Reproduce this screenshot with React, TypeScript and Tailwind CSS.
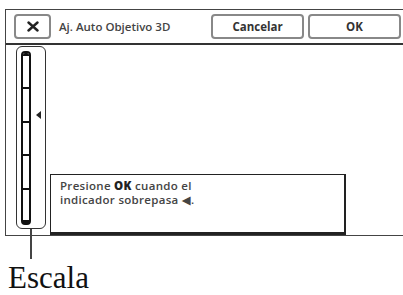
export default function App() {
  const ui = { fontFamily: '"Open Sans", "DejaVu Sans", sans-serif' };

  return (
    <div className="w-[403px] h-[295px] bg-white overflow-hidden pt-[9px]">
      {/* camera screen frame */}
      <div className="ml-[5px] w-[398px] h-[227px] border-l border-t border-b border-[#444] flex flex-col" style={ui}>
        <div className="h-[35px] border-b-2 border-[#333] flex items-center shrink-0">
          <div className="ml-[8px] w-[37px] h-[25px] rounded-[4px] border-2 border-[#888] flex items-center justify-center">
            <svg width="12" height="11" viewBox="0 0 12 11">
              <path d="M1.5 1.5 L10.5 9.5 M10.5 1.5 L1.5 9.5" stroke="#222" strokeWidth="2.4" strokeLinecap="round" />
            </svg>
          </div>
          <div className="ml-[8px] text-[11.5px] font-semibold text-[#444]">Aj. Auto Objetivo 3D</div>
          <div className="ml-auto flex gap-[4px] pr-[2px]">
            <div className="w-[93px] h-[25px] rounded-[4px] border-2 border-[#888] flex items-center justify-center text-[11.5px] font-bold text-[#333]">
              Cancelar
            </div>
            <div className="w-[93px] h-[25px] rounded-[4px] border-2 border-[#888] flex items-center justify-center text-[11.5px] font-bold text-[#333]">
              OK
            </div>
          </div>
        </div>

        <div className="flex flex-1 pt-[1px]">
          {/* scale */}
          <div className="ml-[10px] flex flex-col items-center w-[30px]">
            <div className="relative w-[30px] h-[183px] rounded-[6px] border-[1.5px] border-[#333] flex justify-start pl-[3.5px] pt-[3.5px]">
              <div className="w-[10px] h-[174px] rounded-[4px] border-2 border-[#111] flex flex-col">
                <div className="h-[34px] border-t-[3px] border-[#111] rounded-t-[2px]" />
                <div className="h-[34px] border-t-2 border-[#111]" />
                <div className="h-[33px] border-t-2 border-[#111]" />
                <div className="h-[34px] border-t-2 border-[#111]" />
                <div className="flex-1 border-t-2 border-[#111]" />
                <div className="h-[3px] bg-[#111]" />
              </div>
              <svg className="absolute left-[19px] top-[64px]" width="5" height="8" viewBox="0 0 5 8">
                <path d="M5 0 L0 4 L5 8 Z" fill="#222" />
              </svg>
            </div>
            <div className="w-[1.5px] flex-1 bg-[#444]" />
          </div>

          {/* message */}
          <div className="ml-[4px] flex flex-col justify-end">
            <div className="w-[296px] h-[61px] border-t-[1.5px] border-l-[1.5px] border-r-2 border-b-[3px] border-[#222] pl-[9px] pt-[3px] text-[11.5px] leading-[16px] tracking-[0.3px] font-semibold text-[#444]">
              <div>
                Presione <span className="font-extrabold text-[#222]">OK</span> cuando el
              </div>
              <div className="-mt-[2px]">indicador sobrepasa ◀.</div>
            </div>
          </div>
        </div>
      </div>

      {/* callout */}
      <div className="ml-[30px] w-[1.5px] h-[23px] bg-[#444]" />
      <div
        className="ml-[8px] mt-[6px] text-[31px] leading-[26px] text-[#111]"
        style={{ fontFamily: '"Liberation Serif", serif' }}
      >
        Escala
      </div>
    </div>
  );
}
